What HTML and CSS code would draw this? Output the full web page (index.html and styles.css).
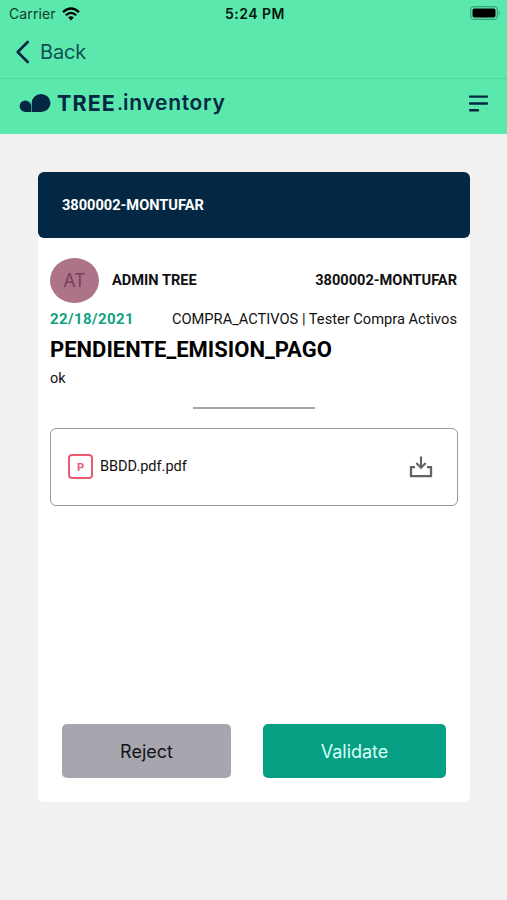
FILE: index.html
```html
<!DOCTYPE html>
<html lang="en">
<head>
    <meta charset="UTF-8">
    <meta name="viewport" content="width=device-width, initial-scale=1.0">
    <title>TREE.inventory</title>
    <link rel="stylesheet" href="styles.css">
</head>
<body>

    <div class="status-bar">
        <div class="carrier">
            <span>Carrier</span>
            <svg width="18" height="14" viewBox="0 0 18 14">
                <path d="M1 5.2 Q9 -2.2 17 5.2" fill="none" stroke="#000" stroke-width="2.3"/>
                <path d="M3.8 8.2 Q9 3.4 14.2 8.2" fill="none" stroke="#000" stroke-width="2.2"/>
                <path d="M6.2 10.5 Q9 8 11.8 10.5 L9 13.5 Z" fill="#000"/>
            </svg>
        </div>
        <span class="time">5:24 PM</span>
        <svg class="battery" width="31" height="14" viewBox="0 0 31 14">
            <rect x="0.6" y="0.6" width="26.8" height="12.8" rx="3.6" fill="none" stroke="#37a377" stroke-width="1.2"/>
            <rect x="2.5" y="2.5" width="23" height="9" rx="2" fill="#000"/>
            <path d="M28.6 4.6 Q31 7 28.6 9.4 Z" fill="#37a377"/>
        </svg>
    </div>

    <nav class="nav-bar">
        <svg width="16" height="24" viewBox="0 0 16 24">
            <path d="M12.7 2 L2.7 12 L12.7 22" fill="none" stroke="#042843" stroke-width="2.6" stroke-linecap="round" stroke-linejoin="round"/>
        </svg>
        <span>Back</span>
    </nav>

    <header>
        <div class="logo">
            <svg width="32" height="19" viewBox="0 0 32 19">
                <path d="M12.2 18 H6 A5.8 5.8 0 1 1 12.2 12.2 Z" fill="#042843"/>
                <path d="M12.7 18 V9.2 A9.4 9 0 1 1 22.2 18 Z" fill="#042843"/>
            </svg>
            <span class="logo-tree">TREE</span><span class="logo-dot">.</span><span class="logo-name">inventory</span>
        </div>
        <svg class="menu" width="19" height="17" viewBox="0 0 19 17">
            <path d="M1 1.6 H18 M1 8.5 H18 M1 15.3 H9" stroke="#042843" stroke-width="2.4" stroke-linecap="round"/>
        </svg>
    </header>

    <main class="card">
        <h1 class="card-header">3800002-MONTUFAR</h1>

        <div class="card-body">
            <div class="user-row">
                <div class="avatar">AT</div>
                <strong>ADMIN TREE</strong>
                <strong class="asset">3800002-MONTUFAR</strong>
            </div>
            <div class="info-row">
                <span class="date">22/18/2021</span>
                <span class="process">COMPRA_ACTIVOS | Tester Compra Activos</span>
            </div>
            <h2>PENDIENTE_EMISION_PAGO</h2>
            <p class="comment">ok</p>
            <hr>

            <div class="file">
                <span class="file-icon">P</span>
                <span class="file-name">BBDD.pdf.pdf</span>
                <svg class="download" width="24" height="22" viewBox="0 0 24 22">
                    <path d="M6 11.2 H2 V20.2 H22 V11.2 H18" fill="none" stroke="#626366" stroke-width="2.3"/>
                    <path d="M12 0.6 V11.5 M7.3 7.1 L12 11.7 L16.7 7.1" fill="none" stroke="#626366" stroke-width="2.1"/>
                </svg>
            </div>
        </div>

        <div class="actions">
            <button class="reject">Reject</button>
            <button class="validate">Validate</button>
        </div>
    </main>

</body>
</html>
```
FILE: styles.css
```css
* {
    box-sizing: border-box;
}
body {
    font-family: Roboto, "Liberation Sans", sans-serif;
    background-color: #f1f1f1;
    color: #111;
    margin: 0;
    padding: 0;
}
svg {
    display: block;
    flex-shrink: 0;
}
.status-bar {
    display: grid;
    grid-template-columns: 1fr auto 1fr;
    align-items: center;
    height: 27px;
    padding: 0 6px 0 9px;
    background-color: #5ae8ac;
    font-family: Inter, sans-serif;
    font-size: 14px;
}
.carrier {
    display: flex;
    align-items: center;
    gap: 6px;
    color: #123c2b;
    letter-spacing: 0.1px;
}
.time {
    font-weight: 600;
    letter-spacing: 0.5px;
    color: #06150f;
}
.battery {
    justify-self: end;
    margin-bottom: 1px;
}
.nav-bar {
    display: flex;
    align-items: center;
    gap: 9px;
    height: 52px;
    padding: 0 15px 1px;
    background-color: #5ae8ac;
    border-bottom: 1px solid #50d79e;
    font-family: Inter, sans-serif;
    font-size: 20px;
    letter-spacing: -0.2px;
    color: #155054;
}
header {
    display: flex;
    align-items: center;
    justify-content: space-between;
    height: 55px;
    padding: 0 19px 7px;
    background-color: #5ae8ac;
    color: #042843;
}
.logo {
    display: flex;
    align-items: center;
    font-family: Inter, sans-serif;
    font-size: 21px;
    line-height: 26px;
}
.logo-tree {
    width: 60px;
    margin-left: 6px;
    font-size: 21.5px;
    font-weight: 700;
    letter-spacing: 1.1px;
}
.logo-dot {
    width: 6px;
    font-weight: 400;
}
.logo-name {
    font-weight: 600;
    letter-spacing: 0.7px;
}
.card {
    display: flex;
    flex-direction: column;
    width: 432px;
    height: 630px;
    margin: 38px 0 0 38px;
    background-color: #fff;
    border-radius: 6px;
}
.card-header {
    display: flex;
    align-items: center;
    height: 66px;
    margin: 0;
    padding: 0 24px;
    background-color: #042843;
    border-radius: 6px;
    color: #fff;
    font-size: 14.6px;
    font-weight: 700;
}
.card-body {
    padding: 20px 12px 0;
}
.user-row {
    display: flex;
    align-items: center;
    height: 45px;
    padding-right: 1px;
    font-size: 14.6px;
}
.user-row strong {
    padding-bottom: 2px;
}
.avatar {
    display: flex;
    align-items: center;
    justify-content: center;
    width: 49px;
    height: 45px;
    margin-right: 13px;
    border-radius: 50%;
    background-color: #ad7389;
    color: #77415b;
    font-family: Inter, sans-serif;
    font-size: 18px;
}
.asset {
    margin-left: auto;
}
.info-row {
    display: flex;
    justify-content: space-between;
    margin-top: 7px;
    padding-right: 1px;
    font-size: 14.65px;
    line-height: 19px;
    white-space: nowrap;
}
.date {
    color: #12a182;
    font-size: 15px;
    font-weight: 700;
    letter-spacing: 0.4px;
}
h2 {
    margin: 7px 0 0;
    font-size: 22px;
    line-height: 28px;
    color: #000;
}
.comment {
    margin: 6px 0 0;
    font-size: 14.5px;
    line-height: 18px;
}
hr {
    width: 122px;
    height: 2px;
    margin: 19px auto 0;
    border: none;
    background-color: #a6a6a6;
}
.file {
    display: flex;
    align-items: center;
    height: 78px;
    margin-top: 19px;
    padding: 0 24px 1px 17px;
    border: 1.5px solid #999;
    border-radius: 6px;
    font-size: 14.5px;
}
.file-icon {
    display: flex;
    align-items: center;
    justify-content: center;
    width: 25px;
    height: 25px;
    margin-right: 7px;
    border: 2px solid #ea5a70;
    border-radius: 4px;
    color: #ea5a70;
    font-family: Inter, sans-serif;
    font-size: 11px;
    font-weight: 700;
}
.file-name {
    padding-bottom: 1px;
}
.download {
    margin-left: auto;
}
.actions {
    display: flex;
    justify-content: space-between;
    margin-top: auto;
    padding: 0 24px 24px;
}
button {
    height: 54px;
    border: none;
    border-radius: 5px;
    font-family: Inter, sans-serif;
    font-size: 18px;
    cursor: pointer;
}
.reject {
    width: 169px;
    background-color: #a7a6ae;
    color: #141416;
}
.validate {
    width: 183px;
    background-color: #079f84;
    color: #d9fff5;
}
```
